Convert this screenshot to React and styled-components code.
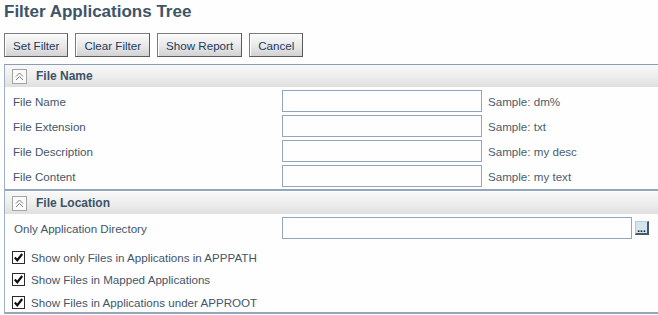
import React from "react";
import styled, { createGlobalStyle } from "styled-components";

const Global = createGlobalStyle`
  html, body { margin: 0; padding: 0; background: #fdfefd; overflow: hidden; }
  body { font-family: "Liberation Sans", Arial, sans-serif; font-size: 11.6px; color: #44566b; }
  * { box-sizing: border-box; }
`;

const Page = styled.div`
  display: flex;
  flex-direction: column;
  padding: 2px 0 0 4px;
  width: 662px;
`;

const Title = styled.h1`
  margin: 0;
  font-size: 17px;
  line-height: 20px;
  font-weight: bold;
  color: #3e5468;
`;

const Toolbar = styled.div`
  display: flex;
  gap: 7px;
  margin-top: 11px;
`;

const Button = styled.button`
  height: 24px;
  padding: 0 8px;
  font-family: inherit;
  font-size: 11.6px;
  color: #1d3a60;
  border: 1px solid #5a5a5a;
  border-top-color: #7a7a7a;
  border-left-color: #7a7a7a;
  background: linear-gradient(#fafafa, #e8e8e8 55%, #d2d2d2);
  box-shadow: inset 1px 1px 0 #ffffff;
  cursor: pointer;
`;

const Panel = styled.div`
  margin-top: 7px;
  border-top: 1px solid #8a9db3;
  border-left: 1px solid #9eb0c3;
  display: flex;
  flex-direction: column;
`;

const Section = styled.section`
  border-bottom: 2px solid #94a6bc;
  padding-bottom: ${(p) => p.$pb || 0}px;
`;

const Header = styled.div`
  height: 22px;
  display: flex;
  align-items: center;
  gap: 9px;
  padding-left: 7px;
  margin-top: ${(p) => p.$mt || 0}px;
  background: linear-gradient(#f8f8f8, #eeeeee 50%, #dfdfdf);
  font-weight: bold;
  font-size: 12px;
  color: #3d5267;
`;

const Toggle = styled.span`
  width: 15px;
  height: 15px;
  border: 1px solid #a4a4a4;
  background: #fafafa;
  display: flex;
  align-items: center;
  justify-content: center;
`;

const Grid = styled.div`
  display: grid;
  grid-template-columns: 263px 200px auto;
  grid-auto-rows: 22px;
  row-gap: 3px;
  column-gap: 6px;
  align-items: center;
  padding: 3px 0 0 8px;
`;

const Label = styled.span`
  color: #44566b;
`;

const TextInput = styled.input`
  width: ${(p) => p.$w || 200}px;
  height: 22px;
  border: 1px solid #92a5ba;
  background: #fdfefd;
  padding: 0 3px;
  font-family: inherit;
  font-size: 12px;
  outline: none;
`;

const Hint = styled.span`
  color: #4b5d70;
`;

const DirRow = styled.div`
  display: grid;
  grid-template-columns: 265px 350px 14px;
  column-gap: 3px;
  align-items: center;
  padding: 3px 0 0 9px;
`;

const BrowseBtn = styled.button`
  width: 14px;
  height: 14px;
  padding: 0;
  border: 1px solid #b8ccd8;
  border-right: 2px solid #455a6a;
  border-bottom: 2px solid #455a6a;
  background: #d3e6ef;
  font-family: inherit;
  font-size: 10px;
  font-weight: bold;
  line-height: 8px;
  color: #111;
  display: flex;
  align-items: flex-end;
  justify-content: center;
  cursor: pointer;
`;

const Checks = styled.div`
  display: flex;
  flex-direction: column;
  gap: 2.5px;
  padding: 8px 0 0 7px;
`;

const CheckRow = styled.label`
  display: flex;
  align-items: center;
  gap: 6px;
  height: 20px;
  color: #44566b;
`;

const Box = styled.span`
  width: 13px;
  height: 13px;
  border: 1px solid #2a2a2a;
  background: #fff;
  display: flex;
  align-items: center;
  justify-content: center;
`;

const Chevrons = () => (
  <svg width="9" height="9" viewBox="0 0 9 9" fill="none" stroke="#7c7c7c" strokeWidth="1">
    <path d="M1 4.5 L4.5 1 L8 4.5" />
    <path d="M1 8 L4.5 4.5 L8 8" />
  </svg>
);

const Check = () => (
  <svg width="11" height="11" viewBox="0 0 11 11" fill="none" stroke="#111" strokeWidth="2.2">
    <path d="M1.8 5.5 L4.3 8.2 L9.2 2" />
  </svg>
);

const fields = [
  ["File Name", "Sample: dm%"],
  ["File Extension", "Sample: txt"],
  ["File Description", "Sample: my desc"],
  ["File Content", "Sample: my text"],
];

const checks = [
  "Show only Files in Applications in APPPATH",
  "Show Files in Mapped Applications",
  "Show Files in Applications under APPROOT",
];

export default function App() {
  return (
    <>
      <Global />
      <Page>
        <Title>Filter Applications Tree</Title>
        <Toolbar>
          <Button>Set Filter</Button>
          <Button>Clear Filter</Button>
          <Button>Show Report</Button>
          <Button>Cancel</Button>
        </Toolbar>
        <Panel>
          <Section $pb={2}>
            <Header>
              <Toggle><Chevrons /></Toggle>
              File Name
            </Header>
            <Grid>
              {fields.map(([l, h]) => (
                <React.Fragment key={l}>
                  <Label>{l}</Label>
                  <TextInput />
                  <Hint>{h}</Hint>
                </React.Fragment>
              ))}
            </Grid>
          </Section>
          <Section $pb={0}>
            <Header $mt={1}>
              <Toggle><Chevrons /></Toggle>
              File Location
            </Header>
            <DirRow>
              <Label>Only Application Directory</Label>
              <TextInput $w={350} />
              <BrowseBtn>...</BrowseBtn>
            </DirRow>
            <Checks>
              {checks.map((c) => (
                <CheckRow key={c}>
                  <Box><Check /></Box>
                  {c}
                </CheckRow>
              ))}
            </Checks>
          </Section>
        </Panel>
      </Page>
    </>
  );
}
